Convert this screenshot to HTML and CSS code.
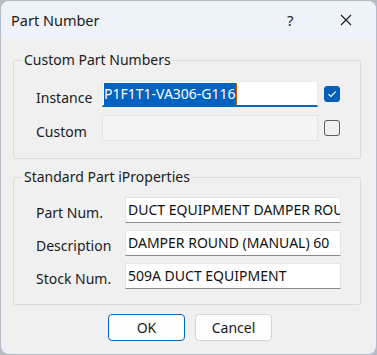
FILE: index.html
```html
<!DOCTYPE html>
<html lang="en">
<head>
    <meta charset="UTF-8">
    <title>Part Number</title>
    <link rel="stylesheet" href="styles.css">
</head>
<body>
    <div class="window">
        <div class="titlebar">
            <span class="title">Part Number</span>
            <span class="help">?</span>
            <span class="close">
                <svg width="12" height="12" viewBox="0 0 12 12"><path d="M1 1L11 11M11 1L1 11" stroke="#1a1a1a" stroke-width="1.1" fill="none"/></svg>
            </span>
        </div>
        <div class="content">
            <fieldset class="group">
                <legend>Custom Part Numbers</legend>
                <div class="rows custom-rows">
                    <label>Instance</label>
                    <div class="field active"><span class="selected">P1F1T1-VA306-G116</span><span class="caret"></span></div>
                    <span class="check checked">
                        <svg width="10" height="8" viewBox="0 0 10 8"><path d="M1.5 4.2L4 6.5L8.7 1.6" stroke="#fff" stroke-width="1.2" fill="none"/></svg>
                    </span>

                    <label>Custom</label>
                    <div class="field disabled"></div>
                    <span class="check"></span>
                </div>
            </fieldset>

            <fieldset class="group">
                <legend>Standard Part iProperties</legend>
                <div class="rows std-rows">
                    <label>Part Num.</label>
                    <div class="field">DUCT EQUIPMENT DAMPER ROUND</div>

                    <label>Description</label>
                    <div class="field">DAMPER ROUND (MANUAL) 60</div>

                    <label>Stock Num.</label>
                    <div class="field">509A DUCT EQUIPMENT</div>
                </div>
            </fieldset>

            <div class="buttons">
                <button class="btn default">OK</button>
                <button class="btn">Cancel</button>
            </div>
        </div>
    </div>
</body>
</html>
```

FILE: styles.css
```css
body {
    margin: 0;
    background: #b4bcc8;
    font-family: 'Noto Sans', 'Open Sans', sans-serif;
    font-size: 14px;
    color: #1b1b1b;
}
.window {
    margin: 1px 0 0 1px;
    width: 375px;
    height: 353px;
    background: #f0f0f0;
    border-radius: 8px;
    overflow: hidden;
}
.titlebar {
    height: 37px;
    background: #eef2f9;
    display: flex;
    align-items: center;
    padding-left: 10px;
}
.title {
    font-size: 14.5px;
    flex: 1;
}
.help {
    font-size: 15px;
    width: 20px;
    margin-right: 33px;
    color: #222;
}
.close {
    width: 12px;
    height: 12px;
    margin-right: 24px;
    display: flex;
}
.content {
    padding: 12px 15px 0 12px;
}
.group {
    margin: 0;
    padding: 0;
    border: 1px solid #dcdcdc;
    border-radius: 2px;
}
.group + .group {
    margin-top: 8px;
}
.group legend {
    margin-left: 8px;
    padding: 0 2px;
    line-height: 20px;
}
.rows {
    display: grid;
    align-items: center;
}
.custom-rows {
    grid-template-columns: 60px 216px 16px;
    column-gap: 6px;
    row-gap: 8px;
    padding: 11px 19px 17px 22px;
}
.custom-rows label {
    padding-top: 6px;
}
.std-rows {
    grid-template-columns: 89px 216px;
    row-gap: 7px;
    padding: 10px 18px 15px 22px;
}
.std-rows label {
    padding-top: 5px;
}
.field {
    height: 26px;
    box-sizing: border-box;
    background: #fff;
    border: 1px solid #e5e5e5;
    border-bottom-color: #8a8a8a;
    padding: 0 2px;
    line-height: 24px;
    white-space: nowrap;
    overflow: hidden;
    color: #111;
}
.field.active {
    border: 1px solid #ececec;
    border-bottom: 2px solid #0067c0;
    padding: 1px 1px 0;
    line-height: 21px;
    display: flex;
}
.selected {
    background: #0063c1;
    color: #fff;
}
.caret {
    width: 1px;
    background: #c86400;
}
.field.disabled {
    background: #f5f5f5;
    border-color: #e3e3e3;
}
.check {
    width: 16px;
    height: 16px;
    box-sizing: border-box;
    border: 1px solid #5e5e5e;
    border-radius: 3px;
    display: flex;
    align-items: center;
    justify-content: center;
}
.check.checked {
    background: #005fb8;
    border-color: #005fb8;
}
.buttons {
    display: flex;
    justify-content: center;
    gap: 10px;
    padding: 9px 0 0 6px;
}
.btn {
    width: 77px;
    height: 27px;
    background: #fdfdfd;
    border: 1px solid #d5d5d5;
    border-radius: 4px;
    font-family: inherit;
    font-size: 14px;
    color: #1b1b1b;
    padding: 0;
}
.btn.default {
    border-color: #0067c0;
}
```
